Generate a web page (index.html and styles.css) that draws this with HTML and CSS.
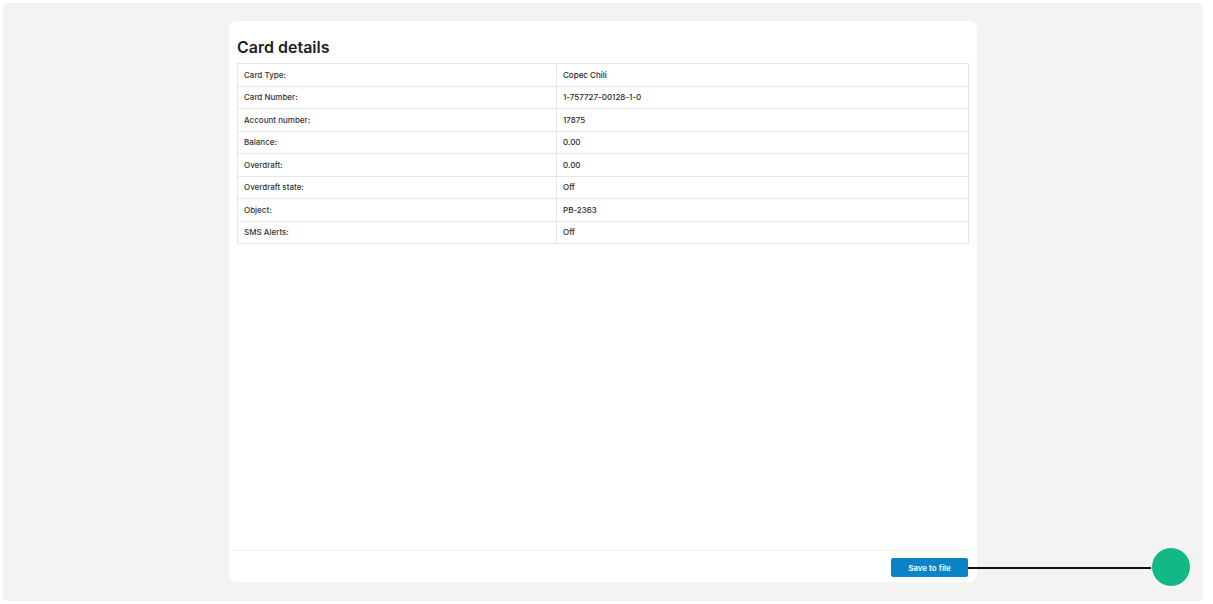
FILE: index.html
```html
<!DOCTYPE html>
<html lang="en">

<head>
  <meta charset="UTF-8">
  <meta name="viewport" content="width=device-width, initial-scale=1.0">
  <title>Card details</title>
  <link rel="stylesheet" href="styles.css">
</head>

<body>
  <div class="page">
    <div class="card">
      <div class="card-body">
        <h2>Card details</h2>
        <table class="details">
          <tr><td>Card Type:</td><td>Copec Chili</td></tr>
          <tr><td>Card Number:</td><td>1-757727-00128-1-0</td></tr>
          <tr><td>Account number:</td><td>17875</td></tr>
          <tr><td>Balance:</td><td>0.00</td></tr>
          <tr><td>Overdraft:</td><td>0.00</td></tr>
          <tr><td>Overdraft state:</td><td>Off</td></tr>
          <tr><td>Object:</td><td>PB-2363</td></tr>
          <tr><td>SMS Alerts:</td><td>Off</td></tr>
        </table>
      </div>
      <div class="card-footer">
        <button class="save-btn">Save to file</button>
      </div>
    </div>
    <div class="pointer-line"></div>
    <div class="pointer-dot"></div>
  </div>
</body>

</html>
```

FILE: styles.css
```css
body,
html {
  height: 100%;
  margin: 0;
  font-family: Inter, "Noto Sans", sans-serif;
  background: #ffffff;
}

.page {
  position: relative;
  box-sizing: border-box;
  margin: 3px 10px 3px 3px;
  height: 598px;
  background-color: #f3f3f3;
  border-radius: 4px;
  display: flex;
  justify-content: center;
  padding: 18px 0 19px;
}

.card {
  width: 748px;
  background: #ffffff;
  border-radius: 8px;
  display: flex;
  flex-direction: column;
}

.card-body {
  flex: 1;
  padding: 16px 8px 8px;
}

.card-body h2 {
  margin: 0 0 6px;
  font-size: 16px;
  font-weight: 600;
  color: #1f1f1f;
  line-height: 20px;
}

.details {
  width: 100%;
  border-collapse: collapse;
  font-size: 8px;
  font-weight: 500;
  color: #2a2a2a;
}

.details td {
  border: 1px solid #e6e6e6;
  height: 22.5px;
  padding: 0 0 0 6px;
  box-sizing: border-box;
}

.details td:first-child {
  width: 319px;
  color: #333333;
}

.card-footer {
  margin: 0 3px;
  border-top: 1px solid #f0f0f0;
  display: flex;
  justify-content: flex-end;
  padding: 7px 6px 5px;
}

.save-btn {
  width: 77px;
  height: 19px;
  border: none;
  border-radius: 2px;
  background-color: #0a84c6;
  color: #ffffff;
  font-family: Inter, "Noto Sans", sans-serif;
  font-size: 8px;
  font-weight: 600;
  padding: 0;
  cursor: pointer;
}

.pointer-line {
  position: absolute;
  left: 965px;
  top: 564px;
  width: 185px;
  height: 1.5px;
  background: #111111;
}

.pointer-dot {
  position: absolute;
  left: 1148px;
  top: 544px;
  width: 38px;
  height: 38px;
  border-radius: 50%;
  background: #12b886;
  border: 1.5px solid #ffffff;
}
```
